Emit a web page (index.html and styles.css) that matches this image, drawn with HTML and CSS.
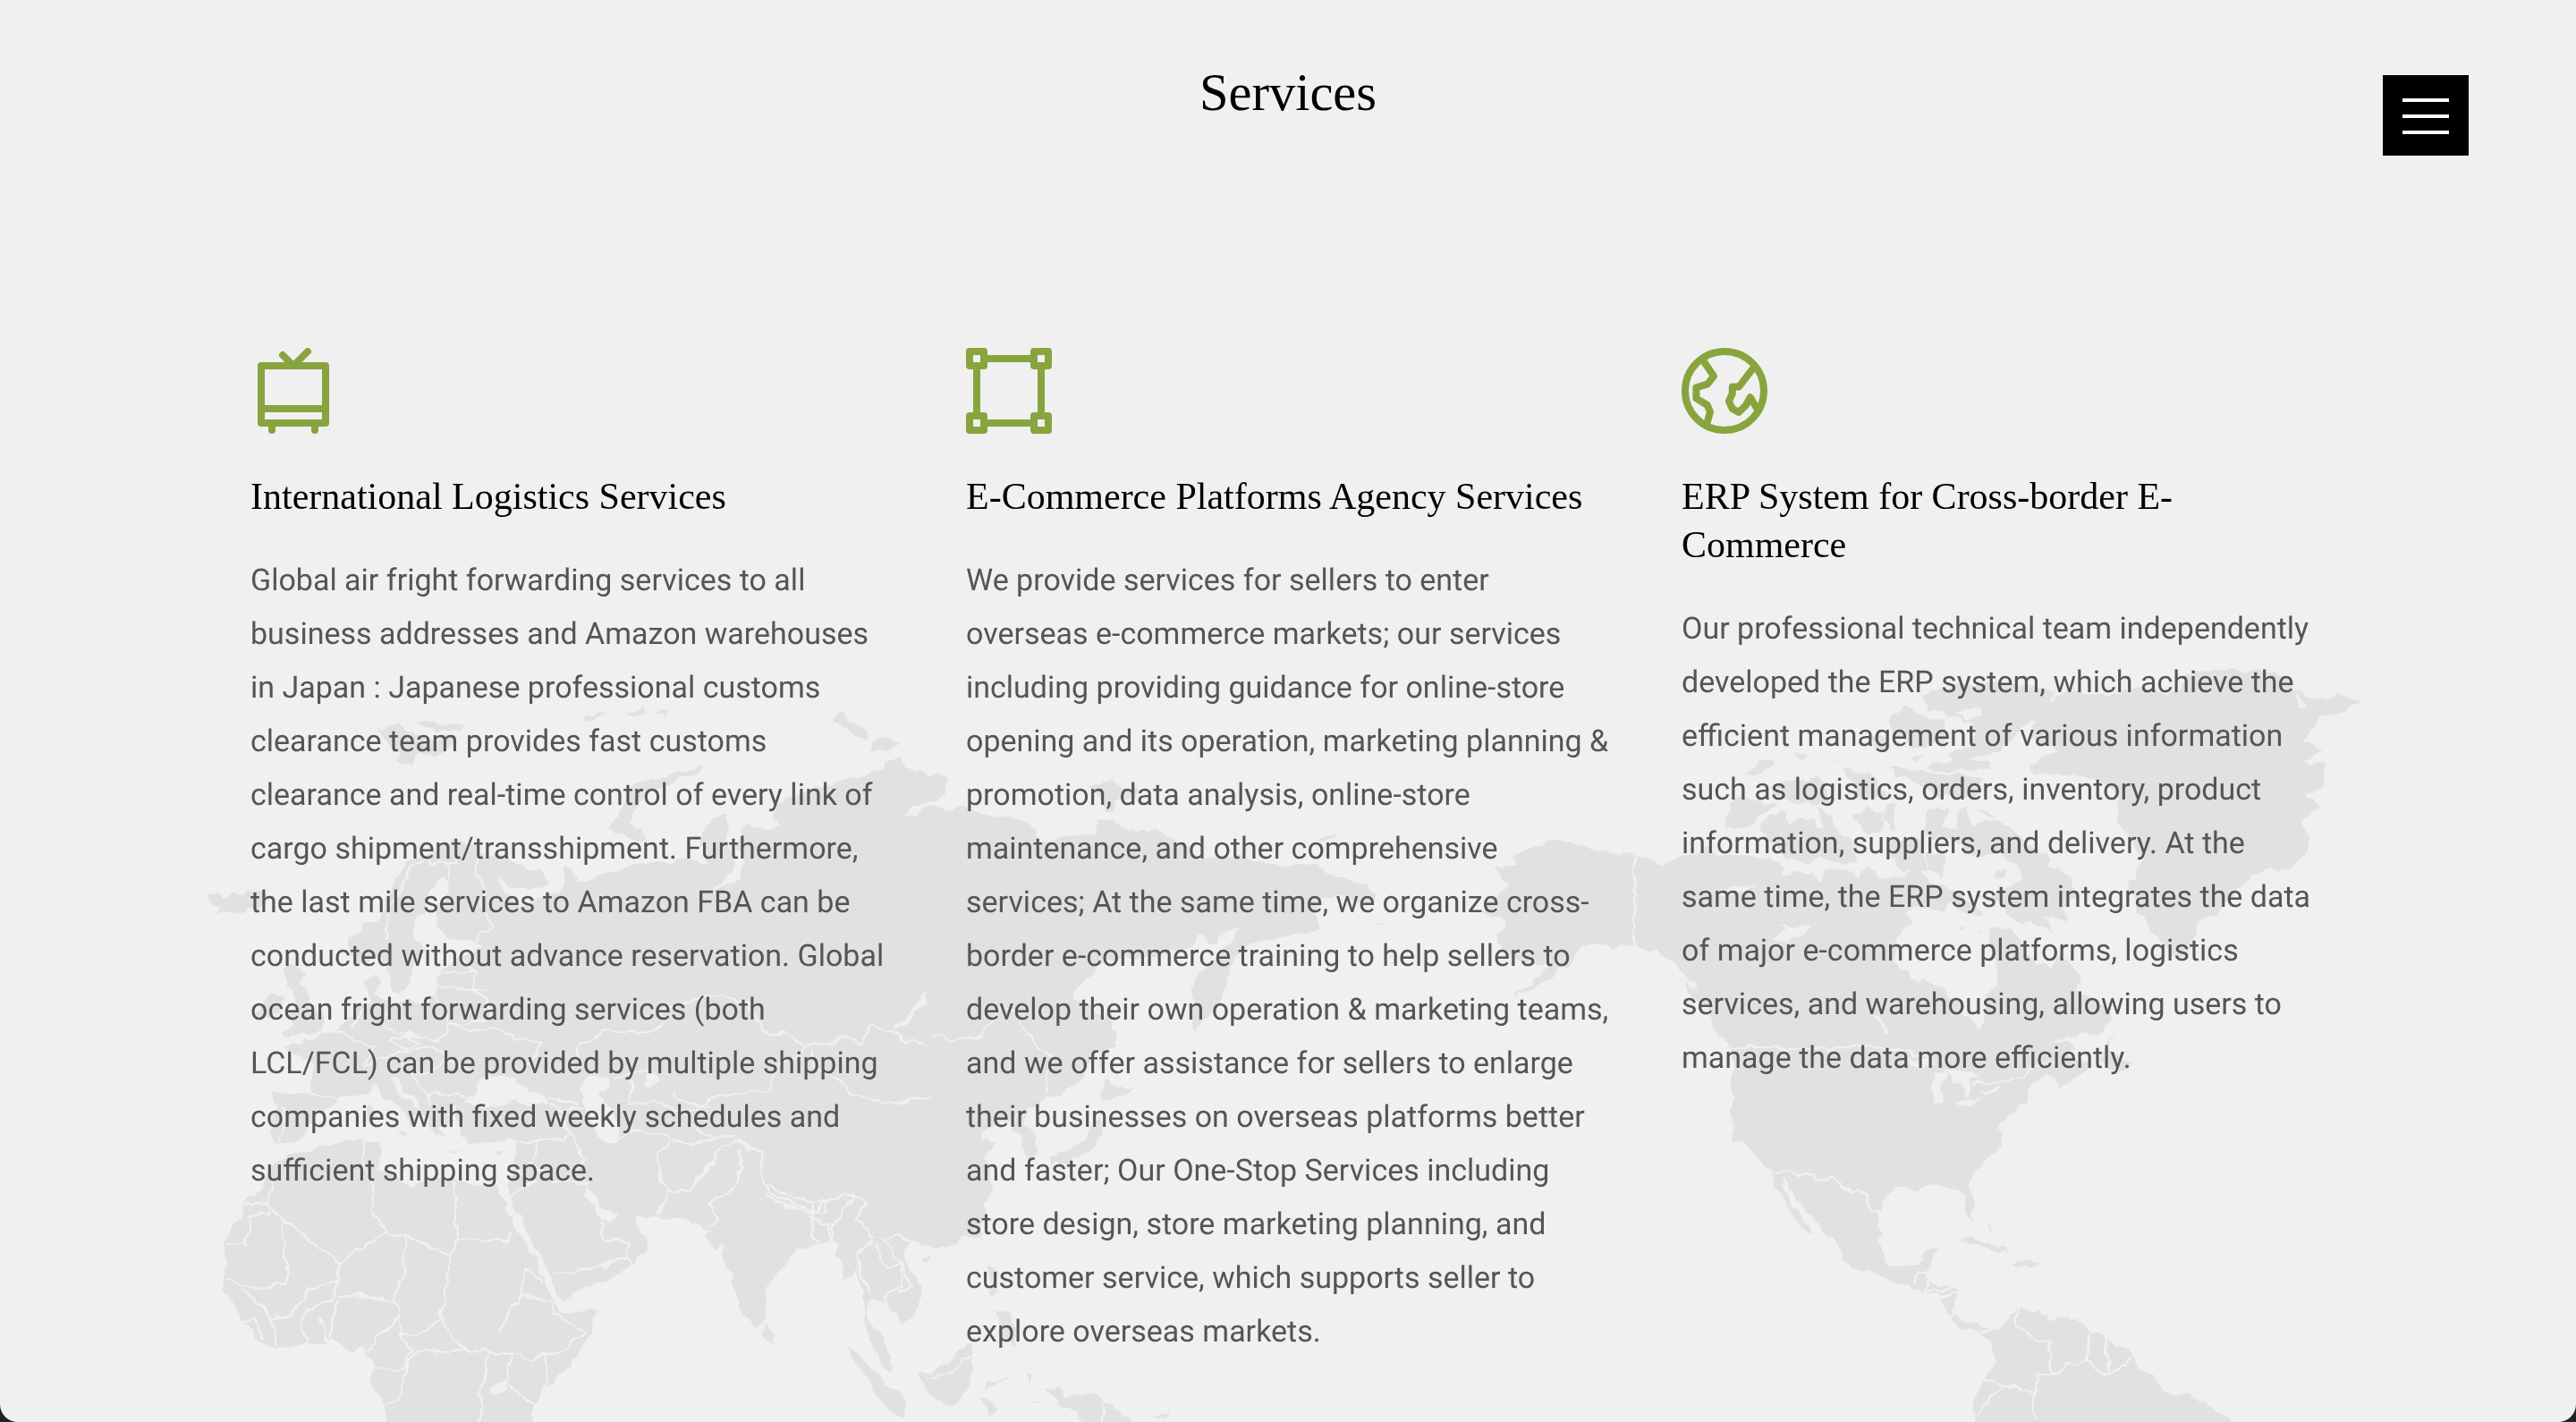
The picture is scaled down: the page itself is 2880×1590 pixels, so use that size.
FILE: index.html
```html
<!DOCTYPE html>
<html lang="en">
<head>
<meta charset="utf-8">
<title>Services</title>
<link rel="stylesheet" href="styles.css">
</head>
<body>
<main class="page">
  <svg class="map" viewBox="0 0 2880 1590" aria-hidden="true">
    <defs>
      <!-- roughens the coastlines -->
      <filter id="coast" filterUnits="userSpaceOnUse" x="0" y="0" width="2880" height="1590" color-interpolation-filters="sRGB">
        <feTurbulence type="fractalNoise" baseFrequency="0.06" numOctaves="2" seed="4" result="noise"/>
        <feDisplacementMap in="SourceGraphic" in2="noise" scale="13" xChannelSelector="R" yChannelSelector="G"/>
      </filter>
    </defs>
    <g filter="url(#coast)">
    <!-- Europe, western Asia and Africa -->
    <g transform="translate(200 760) scale(.57398 .52934)">
      <path class="land" d="M180,868 L215,872 255,880 262,838 255,805 222,790 205,775 215,766 240,772 245,758 262,758 280,745 300,740 315,725 340,712 352,690 372,680 368,655 364,632 384,626 388,645 384,665 400,675 410,685 425,680 450,680 480,680 498,668 500,640 510,615 530,600 540,590 560,580 600,560 570,548 540,552 520,545 505,520 498,490 510,470 530,445 525,425 508,420 485,445 480,470 475,490 460,510 455,530 458,550 470,562 478,580 460,595 455,620 445,650 430,660 418,655 412,625 400,600 395,575 380,590 360,605 340,600 332,580 335,545 355,520 385,505 400,480 410,450 420,425 430,405 450,385 480,370 520,350 545,340 565,348 590,360 600,372 640,380 680,395 710,410 720,425 705,438 690,445 650,437 617,420 630,445 640,452 655,478 672,482 690,462 700,458 740,448 748,430 752,395 770,398 778,430 800,420 830,405 870,400 905,385 940,380 960,390 980,372 1010,385 1030,392 1025,365 1012,345 1020,325 1040,292 1060,292 1070,310 1065,345 1075,365 1085,395 1060,432 1030,440 1070,440 1095,410 1100,380 1090,350 1095,310 1110,302 1125,310 1150,320 1175,310 1155,290 1160,265 1180,250 1225,240 1250,225 1300,212 1350,200 1370,178 1400,165 1415,185 1440,195 1480,198 1500,215 1495,235 1470,252 1425,270 1412,292 1430,285 1465,265 1500,280 1530,270 1565,280 L1565,1172 1535,1178 1500,1192 1460,1198 1440,1190 1425,1188 1412,1210 1412,1230 1430,1255 1445,1290 1443,1325 1410,1358 1400,1340 1380,1330 1370,1312 1350,1308 1342,1335 1352,1368 1370,1395 1385,1425 1390,1465 1372,1445 1358,1415 1335,1380 1338,1320 1325,1280 1322,1250 1312,1262 1295,1265 1290,1232 1280,1205 1268,1182 1255,1195 1230,1200 1205,1205 1170,1250 1145,1280 1140,1350 1120,1372 1105,1348 1090,1310 1075,1270 1065,1225 1062,1190 1045,1205 1025,1180 1035,1170 1000,1140 950,1135 890,1132 870,1140 830,1120 810,1090 790,1070 795,1095 812,1115 820,1145 835,1148 865,1130 882,1132 890,1160 915,1180 905,1210 885,1235 860,1255 830,1272 790,1285 745,1310 735,1295 720,1245 685,1180 670,1140 640,1090 650,1045 658,1005 660,975 640,970 600,978 565,980 545,955 540,930 535,905 550,885 565,895 600,905 640,895 680,895 715,900 720,885 690,870 660,850 665,838 640,842 600,835 585,850 570,880 555,895 530,905 525,920 532,935 510,945 520,965 500,965 488,935 475,915 465,890 440,870 425,845 410,838 415,855 435,880 472,905 475,915 462,918 460,940 448,945 445,915 415,895 392,865 385,850 370,868 330,875 310,880 300,900 270,915 255,945 245,965 205,980 190,975 178,960 182,930 190,900 Z"/>
      <path class="land" d="M210,1002 L245,1000 285,985 330,972 375,970 390,980 385,1030 430,1050 445,1070 480,1065 490,1050 540,1060 590,1065 620,1070 632,1105 655,1150 700,1240 735,1325 745,1342 780,1335 815,1330 800,1380 760,1450 710,1500 690,1540 682,1600 410,1600 400,1540 375,1490 380,1450 360,1415 335,1418 300,1397 250,1405 190,1415 150,1390 120,1340 90,1300 85,1260 95,1230 85,1190 110,1150 125,1110 155,1080 165,1050 Z"/>
      <path class="land" d="M204,610 L228,606 245,620 235,640 252,660 262,700 286,710 280,740 230,752 200,748 225,730 215,700 235,690 212,650 Z M155,680 L180,662 205,668 200,705 175,720 150,715 Z M55,455 L75,445 90,460 130,448 165,450 175,465 155,480 105,497 75,492 82,475 58,470 Z M390,105 L430,95 460,110 490,125 520,120 545,128 505,165 470,150 450,188 425,175 430,150 400,125 Z M455,90 L480,88 555,98 545,110 495,105 470,100 Z M790,80 L830,68 815,80 800,88 Z M870,68 L900,60 915,72 885,78 Z M925,70 L950,68 945,78 Z M1022,187 L1010,200 960,215 915,240 890,265 880,300 900,325 915,345 860,325 838,315 850,290 870,260 880,230 940,205 990,190 Z M1268,85 L1290,68 1310,90 1345,110 1345,122 1320,122 1290,95 Z M1348,150 L1365,120 1410,135 1380,148 Z"/>
      <path class="land" d="M1145,1358 L1160,1385 1155,1402 1142,1398 Z M1300,1412 L1335,1435 1380,1490 1418,1520 1415,1562 1395,1555 1360,1510 1330,1460 Z M1447,1225 L1462,1215 1466,1225 1452,1235 Z M420,955 L445,952 440,965 Z M365,905 L378,900 382,925 368,930 Z M530,992 L555,995 540,998 Z M610,998 L635,990 625,1002 Z"/>
      <path class="sea" d="M800,840 L835,842 838,858 815,870 822,890 845,915 855,945 858,972 835,978 815,965 805,930 790,895 780,862 Z M910,835 L925,830 935,850 920,862 908,855 Z M1457,660 L1450,690 1420,725 1400,738 1390,735 1415,715 1435,690 Z M608,1495 L635,1478 638,1500 620,1515 Z M820,1130 L828,1135 825,1148 Z M618,1070 L630,1095 638,1090 636,1065 Z"/>
      <path class="border" d="M405,550 L408,490 430,450 450,400 480,375 M480,370 L490,390 540,385 545,340 M530,420 L520,385 M590,362 L575,400 600,450 592,490 612,520 575,555 M500,620 L545,625 575,610 M500,645 L560,655 600,655 M555,590 L578,620 570,650 605,680 608,715 530,730 M500,670 L520,700 525,735 505,765 M405,690 L400,735 430,745 470,755 515,765 M530,730 L570,740 615,735 640,750 700,765 700,790 670,815 M300,740 L340,760 380,780 360,810 M365,690 L340,735 M410,765 L440,750 470,770 440,780 Z M360,815 L400,800 440,785 M440,785 L500,780 520,800 490,830 450,830 430,810 M255,880 L330,890 M195,900 L205,930 200,975 M520,800 L570,830 M450,830 L480,870 530,880 570,880 M480,870 L490,900 M720,880 L780,900 M720,895 L750,910 790,905 M735,910 L750,935 770,930 M660,980 L730,968 760,960 750,935 M760,960 L790,1010 770,1050 795,1070 M700,975 L685,1020 650,1045 M685,1025 L730,1055 790,1070 M662,1040 L690,1060 640,1090 M735,1250 L770,1255 790,1240 830,1240 870,1220 875,1190 830,1180 820,1150 M870,1220 L885,1235 M775,800 L780,770 830,740 900,745 940,735 935,700 980,680 1040,665 1110,680 1120,720 1150,745 1180,745 1220,775 M1220,775 L1180,810 1160,830 1145,870 1090,880 1040,885 990,920 930,890 880,900 880,830 915,825 M880,830 L850,850 M960,870 L1000,900 1040,900 M1220,770 L1270,770 1300,755 1330,765 1345,730 1390,745 1420,765 1470,775 1500,765 1560,770 M1225,780 L1240,820 1280,845 1310,880 1400,895 1475,880 1480,850 1510,850 1530,810 1568,800 M855,970 L900,950 970,975 1000,980 1060,960 1085,970 M990,920 L1020,960 1050,965 M935,1000 L960,975 M935,1000 L935,1050 950,1080 935,1130 M950,1080 L1000,1080 1015,1050 1050,1010 1055,980 1090,975 1110,990 1145,1000 1130,1030 1145,1070 1150,1085 1200,1110 1235,1120 1290,1090 1315,1085 1335,1110 1325,1140 1355,1180 M1095,990 L1100,1030 1075,1080 1035,1110 1050,1145 1025,1155 M1150,1070 L1190,1095 1230,1105 1230,1125 1180,1110 1145,1090 M1235,1105 L1265,1105 1260,1125 1235,1120 M1230,1130 L1235,1165 1245,1195 M1230,1140 L1270,1150 1265,1175 1272,1200 M1315,1090 L1280,1140 1270,1180 M1355,1185 L1325,1210 1330,1260 1345,1300 M1355,1190 L1380,1240 1405,1240 1410,1290 1380,1300 1370,1325 M1370,1175 L1400,1230 1430,1285 1405,1300 M1370,1178 L1400,1172 1425,1190"/>
      <path class="border" d="M180,1055 L178,1110 130,1108 M178,1110 L175,1130 137,1130 130,1195 90,1195 M178,1110 L205,1145 310,1228 410,1165 375,1130 380,1080 360,1030 365,970 M200,1150 L210,1275 145,1285 90,1270 M410,1165 L440,1175 530,1218 538,1185 538,1065 M538,1185 L640,1185 655,1165 M530,1218 L525,1270 510,1330 520,1375 560,1415 600,1420 M440,1175 L440,1250 415,1310 M310,1228 L315,1270 250,1290 220,1340 180,1345 150,1310 120,1290 M315,1270 L295,1310 240,1340 245,1405 M305,1305 L350,1300 415,1310 430,1345 395,1385 365,1420 M305,1310 L300,1350 295,1395 M275,1345 L290,1400 M180,1345 L190,1410 M150,1350 L125,1355 M150,1350 L160,1390 M430,1345 L430,1380 450,1420 440,1455 380,1455 M430,1385 L470,1380 520,1345 M440,1455 L460,1425 560,1415 M440,1455 L430,1520 400,1535 M600,1420 L590,1480 585,1568 M600,1420 L650,1425 690,1435 715,1430 710,1500 M625,1380 L640,1340 665,1300 680,1245 705,1270 M665,1300 L720,1310 735,1340 790,1380 740,1420 690,1435 M650,1425 L635,1480 700,1540"/>
    </g>

    <!-- East Asia and the western Pacific -->
    <g transform="translate(900 800) scale(.57398 .50383)">
      <path class="land" d="M240,215 L285,212 320,225 345,222 400,225 440,250 455,275 495,270 540,265 568,265 570,230 600,235 640,262 680,250 720,275 775,320 850,310 920,335 990,330 1020,350 1050,360 1090,378 1118,400 1095,415 1060,410 1040,400 1000,410 990,440 1003,472 960,480 900,500 850,520 828,560 826,600 800,650 760,702 752,670 758,600 762,570 800,540 820,510 845,475 820,480 800,505 770,490 740,520 700,530 640,540 590,540 560,565 520,625 545,640 580,665 585,700 570,750 530,810 495,845 470,850 440,870 425,895 450,935 452,970 425,980 420,940 405,920 410,895 375,900 345,925 340,945 370,945 350,975 362,1010 368,1045 345,1100 310,1145 260,1170 240,1180 Z"/>
      <path class="land" d="M550,155 L580,143 625,160 655,165 640,180 600,190 608,212 588,215 575,185 Z M1003,270 L1040,268 1015,278 Z M1110,458 L1135,460 1120,465 Z M588,640 L600,690 605,735 590,735 578,790 575,730 Z M590,805 L610,825 640,825 615,850 580,855 575,840 Z M575,890 L580,930 560,960 530,985 500,1000 480,980 510,965 545,945 560,900 Z M475,985 L490,985 485,1010 Z M355,1220 L375,1230 370,1280 360,1290 Z M370,1320 L400,1330 410,1360 410,1395 385,1385 Z M225,1460 L250,1455 285,1430 320,1395 325,1400 328,1450 322,1490 290,1530 240,1510 Z M355,1480 L395,1468 360,1490 345,1510 375,1540 360,1550 345,1520 Z M430,1460 L442,1470 435,1485 Z M470,1495 L495,1490 505,1515 545,1505 600,1530 670,1600 565,1600 530,1545 500,1535 485,1510 Z M680,1558 L710,1540 700,1560 Z M440,1525 L465,1525 445,1530 Z"/>
      <path class="border" d="M240,710 L310,722 340,715 375,650 405,650 435,720 480,760 470,840 M580,1522 L580,1568 M240,1470 L290,1455 325,1420 M405,900 L440,870"/>
    </g>

    <!-- The Americas and Greenland -->
    <g transform="translate(1650 720) scale(.65689 .55485)">
      <path class="land" d="M30,452 L70,445 60,430 95,410 140,397 200,415 270,425 320,442 350,430 380,425 420,450 450,700 700,860 880,960 890,970 895,1015 860,1050 840,1090 850,1135 848,1162 830,1130 825,1100 780,1090 750,1100 715,1095 690,1120 685,1175 690,1220 710,1255 750,1250 765,1220 788,1215 770,1260 770,1285 815,1295 815,1345 840,1370 878,1380 885,1385 920,1345 955,1340 975,1362 1020,1355 1045,1385 1075,1400 1120,1430 1140,1470 1170,1500 1240,1525 1285,1568 1300,1600 845,1600 848,1520 865,1475 882,1445 878,1400 850,1385 820,1375 803,1350 790,1310 745,1305 735,1290 695,1283 640,1255 620,1235 610,1200 580,1165 540,1110 525,1072 520,1085 545,1140 572,1190 560,1185 535,1145 510,1090 502,1060 470,1020 450,985 435,950 438,860 440,820 405,775 395,745 370,710 345,650 300,615 245,610 205,600 180,610 165,640 130,670 80,705 65,712 110,670 125,645 75,640 40,615 35,590 55,560 10,540 35,500 55,490 Z"/>
      <path class="land" d="M950,130 L1010,100 1080,105 1120,90 1200,100 1210,60 1290,50 1360,60 1395,75 1385,95 1430,115 1470,100 1508,118 1480,135 1440,145 1410,195 1440,215 1410,240 1445,240 1440,290 1410,300 1435,330 1405,350 1415,380 1415,415 1390,450 1340,455 1300,490 1270,535 1230,560 1215,610 1200,640 1160,590 1130,540 1110,490 1140,435 1120,400 1090,350 1095,310 1070,275 1030,265 950,260 940,240 990,215 940,190 Z"/>
      <path class="land" d="M1090,780 L1075,820 1115,845 1100,860 1060,840 Z M815,1205 L845,1192 905,1225 890,1228 850,1205 Z M910,1248 L935,1237 965,1248 930,1255 Z M872,1165 L878,1180 874,1183 Z M980,1250 L995,1252 Z"/>
      <path class="sea" d="M1395,105 L1420,125 1405,130 Z"/>
    </g>

    <!-- Canada and the Arctic islands -->
    <g transform="translate(1900 740) scale(.33333)">
      <path class="land" d="M-10,645 L30,625 60,650 150,645 230,655 280,680 270,710 360,708 380,700 400,745 430,700 460,690 540,720 560,675 600,700 610,735 660,720 740,690 770,740 840,750 860,790 820,840 770,820 680,845 720,870 680,905 660,940 655,1010 695,1030 700,1062 780,1080 830,1120 895,1150 890,1180 930,1232 958,1218 965,1160 960,1120 1000,1080 995,1020 975,970 975,900 1040,898 1080,930 1100,980 1130,1005 1180,1030 1210,985 1240,1000 1280,1070 1270,1095 1330,1140 1380,1160 1390,1205 1350,1240 1310,1255 1210,1258 1170,1285 1230,1270 1262,1290 1240,1310 1262,1345 1310,1345 1300,1370 1240,1400 1210,1432 1195,1405 1160,1385 1105,1430 1100,1480 1040,1520 1000,1560 1000,1600 110,1600 108,1340 120,1300 50,1230 10,1150 Z"/>
      <path class="land" d="M75,550 L110,470 150,450 260,480 200,520 170,560 120,565 Z M205,530 L270,510 300,540 340,515 360,540 385,530 400,565 420,560 400,490 440,510 455,560 500,590 530,640 520,680 440,665 400,650 340,680 290,660 250,620 230,580 200,560 Z M240,420 L330,400 400,380 440,470 380,480 320,465 250,450 Z M150,385 L200,330 260,330 240,360 190,380 Z M310,310 L360,310 350,330 320,330 Z M450,315 L475,335 460,330 Z M480,360 L540,370 600,400 620,460 540,460 500,400 Z M510,520 L560,490 620,510 615,570 560,580 Z M625,480 L660,470 650,560 620,540 Z M630,350 L700,350 760,370 880,380 950,400 930,450 800,450 740,410 660,380 Z M760,350 L850,330 840,300 910,285 920,200 850,185 770,155 750,110 850,80 1000,70 1130,80 1200,100 1170,135 1120,190 1060,240 1020,300 900,325 970,335 980,355 880,365 780,365 Z M640,180 L690,150 740,180 820,200 830,260 750,290 660,260 640,220 Z M560,250 L620,260 650,300 590,290 Z M700,325 L750,320 740,335 Z"/>
      <path class="land" d="M750,560 L760,510 800,488 835,490 815,560 870,560 860,500 900,490 915,545 945,535 1000,530 1060,580 1110,620 1170,650 1160,680 1220,700 1250,730 1270,790 1215,820 1225,870 1150,850 1190,910 1120,880 1050,860 1000,810 930,790 1000,770 1080,730 1060,680 1000,640 960,650 890,640 830,600 780,600 Z M930,488 L1000,515 960,518 Z M985,700 L1020,697 1025,722 990,730 Z M820,750 L880,770 950,840 900,855 830,810 Z M640,600 L740,600 770,700 700,700 630,660 Z M760,640 L830,650 810,730 770,690 Z M870,890 L890,880 885,895 Z M935,910 L945,905 942,918 Z"/>
      <path class="sea" d="M240,930 L290,905 265,890 300,895 378,882 340,920 270,945 Z M60,775 L190,745 150,770 80,790 Z M575,1185 L600,1195 630,1248 612,1252 600,1215 Z M785,1480 L780,1420 795,1380 830,1368 810,1420 815,1478 Z M700,1325 L770,1335 790,1360 700,1355 Z M830,1370 L925,1378 935,1410 910,1402 900,1462 885,1430 850,1410 Z M865,1480 L950,1452 900,1495 Z M940,1440 L1010,1422 1000,1445 Z M850,170 L950,150 945,178 900,190 Z"/>
    </g>
    <g transform="translate(1650 720) scale(.65689 .55485)">
      <path class="border" d="M270,425 L270,615 310,620 340,660 375,690 M440,813 L715,813 750,825 800,845 M845,890 L890,880 930,875 950,850 990,845 M502,1062 L540,1065 590,1080 605,1072 640,1108 655,1100 680,1145 690,1150 M745,1290 L755,1265 770,1265 M770,1285 L765,1305 815,1295 M780,1310 L815,1310 M803,1350 L815,1345 M855,1385 L878,1380 M925,1345 L920,1375 945,1400 980,1410 975,1450 985,1475 955,1475 950,1568 M848,1475 L900,1490 885,1520 850,1550 M900,1490 L950,1510 M985,1475 L1010,1450 1040,1440 1045,1390 M1040,1440 L1055,1470 1080,1465 1070,1430 1075,1400 M1080,1465 L1110,1460 1120,1430"/>
    </g>
    </g>
  </svg>

  <header class="header">
    <h1 class="title">Services</h1>
    <button class="menu" aria-label="Menu"><span class="bar"></span><span class="bar"></span><span class="bar"></span></button>
  </header>

  <section class="services">
    <article class="service">
      <svg class="icon" viewBox="0 0 24 24"><rect x="3" y="5" width="18" height="16"/><path d="M3 17H21M6 21V23M18 21V23M9 2L12 5L16 1"/></svg>
      <h2 class="name">International Logistics Services</h2>
      <p class="text">Global air fright forwarding services to all<br>business addresses and Amazon warehouses<br>in Japan : Japanese professional customs<br>clearance team provides fast customs<br>clearance and real-time control of every link of<br>cargo shipment/transshipment. Furthermore,<br>the last mile services to Amazon FBA can be<br>conducted without advance reservation. Global<br>ocean fright forwarding services (both<br>LCL/FCL) can be provided by multiple shipping<br>companies with fixed weekly schedules and<br>sufficient shipping space.</p>
    </article>
    <article class="service">
      <svg class="icon" viewBox="0 0 24 24"><path d="M1 1H5V5H1ZM19 1H23V5H19ZM1 19H5V23H1ZM19 19H23V23H19ZM5 3H19M5 21H19M3 5V19M21 5V19"/></svg>
      <h2 class="name">E-Commerce Platforms Agency Services</h2>
      <p class="text">We provide services for sellers to enter<br>overseas e-commerce markets; our services<br>including providing guidance for online-store<br>opening and its operation, marketing planning &amp;<br>promotion, data analysis, online-store<br>maintenance, and other comprehensive<br>services; At the same time, we organize cross-<br>border e-commerce training to help sellers to<br>develop their own operation &amp; marketing teams,<br>and we offer assistance for sellers to enlarge<br>their businesses on overseas platforms better<br>and faster; Our One-Stop Services including<br>store design, store marketing planning, and<br>customer service, which supports seller to<br>explore overseas markets.</p>
    </article>
    <article class="service">
      <svg class="icon" viewBox="0 0 24 24"><circle cx="12" cy="12" r="11"/><path d="M5.9 3.3L9 7.9L7.3 10.1L4.1 11.1V14.1L7.2 16L8 17.9L7 21.4M20.4 5.2L16 10.9H14.2V12.8L13.2 14.9L14.2 17L16 18L18 16L19.2 13.8L21.2 17.2"/></svg>
      <h2 class="name">ERP System for Cross-border E-<br>Commerce</h2>
      <p class="text">Our professional technical team independently<br>developed the ERP system, which achieve the<br>efficient management of various information<br>such as logistics, orders, inventory, product<br>information, suppliers, and delivery. At the<br>same time, the ERP system integrates the data<br>of major e-commerce platforms, logistics<br>services, and warehousing, allowing users to<br>manage the data more efficiently.</p>
    </article>
  </section>
</main>
</body>
</html>
```
FILE: styles.css
```css
body {
  margin: 0;
  background: #222;
}

.page {
  position: relative;
  box-sizing: border-box;
  height: 1590px;
  overflow: hidden;
  background: #f0f0f0;
  border-radius: 0 0 20px 20px;
}

.map {
  position: absolute;
  inset: 0;
  width: 2880px;
  height: 1590px;
}

.land {
  fill: #e1e1e1;
}

.sea {
  fill: #f0f0f0;
}

.border {
  fill: none;
  stroke: #f1f1f1;
  stroke-width: 4;
  stroke-linejoin: round;
}

.header {
  position: relative;
  display: grid;
  grid-template-columns: 1fr auto 1fr;
  align-items: start;
  height: 389px;
  padding: 0 120px;
  box-sizing: border-box;
}

.title {
  grid-column: 2;
  margin: 69px 0 0;
  font: 400 58.5px/70px "Liberation Serif", "Times New Roman", serif;
  color: #000;
}

.menu {
  justify-self: end;
  display: flex;
  flex-direction: column;
  align-items: center;
  gap: 14px;
  box-sizing: border-box;
  width: 96px;
  height: 90px;
  margin-top: 84px;
  padding: 26px 0 0;
  border: 0;
  background: #000;
}

.bar {
  width: 52px;
  height: 4px;
  background: #fff;
}

.services {
  position: relative;
  display: grid;
  grid-template-columns: repeat(3, 720px);
  gap: 80px;
  padding-left: 280px;
}

.icon {
  display: block;
  width: 96px;
  height: 96px;
  overflow: visible;
  fill: none;
  stroke: #88a43f;
  stroke-width: 2;
  stroke-linejoin: round;
  stroke-linecap: round;
}

.name {
  margin: 43px 0 0;
  font: 400 42px/54px "Liberation Serif", "Times New Roman", serif;
  color: #000;
  white-space: nowrap;
}

.text {
  margin: 37px 0 0;
  font: 400 34px/60px Roboto, sans-serif;
  color: #555;
  white-space: nowrap;
  text-rendering: geometricPrecision;
}
```
